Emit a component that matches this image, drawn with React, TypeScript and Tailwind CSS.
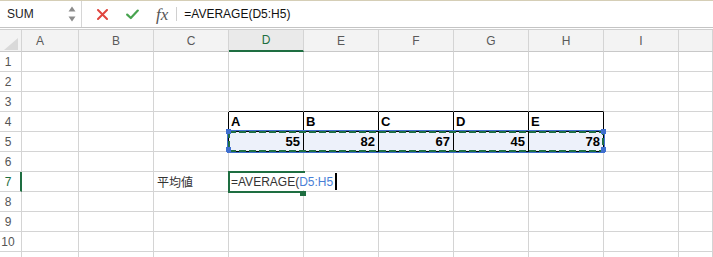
import React from 'react'

const COLS = ['A', 'B', 'C', 'D', 'E', 'F', 'G', 'H', 'I', 'J']
const ROWS = [1, 2, 3, 4, 5, 6, 7, 8, 9, 10, 11]
const TABLE_COLS = ['D', 'E', 'F', 'G', 'H']
const LABELS: Record<string, string> = { D: 'A', E: 'B', F: 'C', G: 'D', H: 'E' }
const VALUES: Record<string, number> = { D: 55, E: 82, F: 67, G: 45, H: 78 }

function FormulaBar() {
    return (
        <div className="flex h-[28px] items-stretch border-t border-b border-t-[#d5ceb6] border-b-[#c4c4c4] bg-white">
            {/* name box */}
            <div className="flex w-[82px] items-center justify-between border-r border-r-[#d6d6d6] pl-[7px] pr-[5px]">
                <span className="text-[12px] text-[#222]">SUM</span>
                <svg width="8" height="16" viewBox="0 0 8 16">
                    <path d="M4 0.5 L7.5 5.5 H0.5 Z" fill="#8c8c8c" />
                    <path d="M4 15.5 L7.5 10.5 H0.5 Z" fill="#8c8c8c" />
                </svg>
            </div>
            {/* cancel / enter / fx */}
            <div className="flex items-center">
                <svg className="ml-[15px]" width="11" height="11" viewBox="0 0 11 11">
                    <path d="M1 1 L10 10 M10 1 L1 10" stroke="#e0453f" strokeWidth="2" strokeLinecap="round" />
                </svg>
                <svg className="ml-[18px]" width="13" height="11" viewBox="0 0 13 11">
                    <path d="M1.2 5.6 L4.8 9 L11.8 1.6" stroke="#47a34f" strokeWidth="2.2" fill="none" strokeLinecap="round" strokeLinejoin="round" />
                </svg>
                <span className="ml-[17px] font-['Liberation_Serif',serif] text-[17px] italic leading-none text-[#555]">fx</span>
                <span className="ml-[8px] h-[14px] w-px bg-[#d0d0d0]"></span>
                <span className="ml-[7px] text-[12px] text-[#111]">=AVERAGE(D5:H5)</span>
            </div>
        </div>
    )
}

function SelectionMarquee() {
    return (
        <svg className="pointer-events-none absolute -left-[2px] -top-[2px] z-10 overflow-visible" width="378" height="23" viewBox="0 0 378 23">
            <rect x="0.5" y="0.5" width="377" height="22" fill="none" stroke="#3f6fcf" strokeWidth="1" />
            <rect x="2" y="2" width="374" height="19" fill="none" stroke="#1f6e43" strokeWidth="2" strokeDasharray="7 3" />
            <rect x="-1" y="-1" width="5" height="5" fill="#3f6fcf" />
            <rect x="-1" y="17" width="5" height="5" fill="#3f6fcf" />
            <rect x="374" y="-1" width="5" height="5" fill="#3f6fcf" />
            <rect x="374" y="17" width="5" height="5" fill="#3f6fcf" />
        </svg>
    )
}

function ActiveCell() {
    return (<>
        <div className="pointer-events-none absolute -left-px -top-px z-10 h-[22px] w-[77px] border-2 border-r-0 border-[#1e6e41]">
            <span className="absolute left-[70px] top-[18px] h-[5px] w-[6px] bg-[#1e6e41]"></span>
        </div>
        {/* in-cell editor overflowing into E7 */}
        <div className="absolute left-px top-px z-20 flex h-[17px] items-center bg-white pl-[1px] pr-[1px] text-[12px] whitespace-nowrap">
            <span className="text-[#333]">=AVERAGE(</span>
            <span className="text-[#4a7fd6]">D5:H5</span>
            <span className="ml-[2px] h-[17px] w-[2px] bg-black"></span>
        </div>
    </>)
}

function Cell({ row, col }: { row: number, col: string }) {
    const table = TABLE_COLS.includes(col)
    const blackRight = (table || col === 'C') && (row === 4 || row === 5)
    const blackBottom = table && row >= 3 && row <= 5
    const base = `flex items-center border-r border-b ${blackRight ? 'border-r-black' : 'border-r-[#d4d4d4]'} ${blackBottom ? 'border-b-black' : 'border-b-[#d4d4d4]'}`

    if (table && row === 4) {
        return <div className={`${base} pl-[2px] text-[13px] font-bold text-black`}>{LABELS[col]}</div>
    }
    if (table && row === 5) {
        return (
            <div className={`${base} relative justify-end bg-[#edf1fa] pr-[3px] text-[13px] font-bold text-black`}>
                {col === 'D' && <SelectionMarquee />}
                {VALUES[col]}
            </div>
        )
    }
    if (col === 'C' && row === 7) {
        return <div className={`${base} pl-[3px] font-['Noto_Sans_CJK_JP',sans-serif] text-[12px] text-[#333]`}>平均値</div>
    }
    if (col === 'D' && row === 7) {
        return <div className={`${base} relative`}><ActiveCell /></div>
    }
    return <div className={base}></div>
}

function Sheet() {
    return (
        <div className="mt-px grid grid-cols-[22px_57px_75px_75px_75px_75px_75px_75px_75px_75px_1fr] grid-rows-[22px_repeat(11,20px)] border-t border-t-[#cfcfcf] text-[12px]">
            {/* corner */}
            <div className="flex items-end justify-end border-r border-b border-r-[#d4d4d4] border-b-[#c8c8c8] bg-[#f3f3f3] pr-[3px] pb-[1px]">
                <svg width="14" height="12" viewBox="0 0 14 12">
                    <path d="M14 0 L14 12 L0 12 Z" fill="#d9d9d9" />
                </svg>
            </div>
            {/* column headers */}
            {COLS.map((c) => (
                c === 'D' ?
                    <div key={c} className="flex items-center justify-center border-r border-b-2 border-r-[#d4d4d4] border-b-[#1e6e41] bg-[#eaeaea] text-[#1e6e41]">{c}</div>
                    :
                    <div key={c} className={`flex items-center border-r border-b border-r-[#d4d4d4] border-b-[#c8c8c8] bg-[#f3f3f3] text-[#5a5a5a] ${c === 'A' ? 'justify-start pl-[14px]' : 'justify-center'}`}>
                        {c === 'J' ? '' : c}
                    </div>
            ))}
            {/* rows */}
            {ROWS.map((r) => (
                <React.Fragment key={r}>
                    {
                        r === 7 ?
                            <div className="flex items-center justify-center border-r-2 border-b border-r-[#1e6e41] border-b-[#d4d4d4] bg-white pr-[4px] text-[#1e6e41]">{r}</div>
                            :
                            <div className="flex items-center justify-center border-r border-b border-r-[#d4d4d4] border-b-[#d4d4d4] bg-white pr-[5px] text-[#555]">{r}</div>
                    }
                    {COLS.map((c) => <Cell key={c} row={r} col={c} />)}
                </React.Fragment>
            ))}
        </div>
    )
}

export default function App() {
    return (
        <div className="h-[257px] w-[713px] overflow-hidden bg-white font-['Liberation_Sans','Noto_Sans_CJK_JP',sans-serif] text-[#222]">
            <FormulaBar />
            <Sheet />
        </div>
    )
}
